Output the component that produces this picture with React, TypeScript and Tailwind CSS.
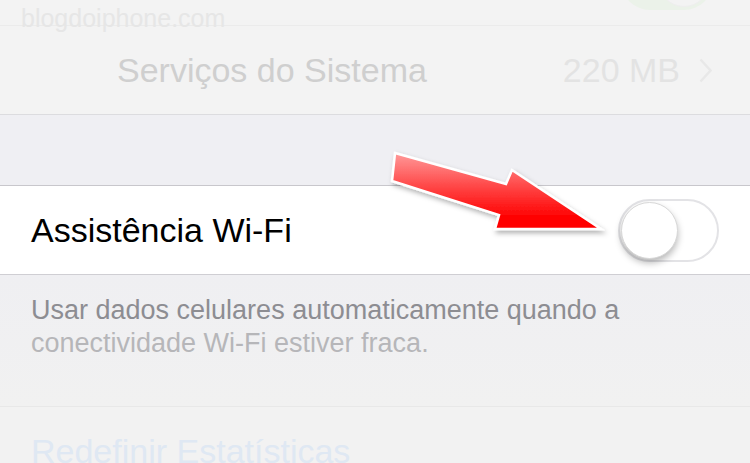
import React from 'react';

function Toggle({ faded = false }: { faded?: boolean }) {
  if (faded) {
    return (
      <div className="relative w-[92px] h-[58px] rounded-full bg-[#ebf2e9] flex items-center justify-end pr-[3px]">
        <div className="w-[52px] h-[52px] rounded-full bg-[#f3f3f3] border border-[#eeeeee]" />
      </div>
    );
  }
  return (
    <div className="w-[101px] h-[63px] rounded-full border-2 border-[#e3e3e6] bg-white flex items-center px-[1px]">
      <div className="w-[57px] h-[57px] rounded-full bg-white border border-[#d8d8d8] shadow-[0_4px_7px_rgba(0,0,0,0.28)]" />
    </div>
  );
}

function Arrow() {
  return (
    <svg className="absolute left-0 top-0 pointer-events-none" width="750" height="463" viewBox="0 0 750 463">
      <defs>
        <linearGradient id="arrowFill" x1="0" y1="152" x2="0" y2="230" gradientUnits="userSpaceOnUse">
          <stop offset="0" stopColor="#ff9c9c" />
          <stop offset="0.5" stopColor="#ff3c3c" />
          <stop offset="0.85" stopColor="#ff0000" />
          <stop offset="1" stopColor="#ff0000" />
        </linearGradient>
        <filter id="arrowShadow" x="-10%" y="-20%" width="130%" height="160%">
          <feDropShadow dx="2" dy="3" stdDeviation="2.5" floodColor="#000" floodOpacity="0.3" />
        </filter>
      </defs>
      <polygon
        points="395,153 506,184 512,170 601,229 495,229 499,215 392,181"
        fill="url(#arrowFill)"
        stroke="#ffffff"
        strokeWidth="2.5"
        strokeLinejoin="miter"
        filter="url(#arrowShadow)"
      />
    </svg>
  );
}

export default function App() {
  return (
    <div className="relative w-[750px] h-[463px] overflow-hidden bg-[#efeff3] font-['Liberation_Sans',Arial,sans-serif]">
      {/* previous row, mostly cut off */}
      <div className="h-[25px] bg-[#f3f3f3] flex items-end justify-end pr-[37px] pb-[15px] overflow-hidden">
        <Toggle faded />
      </div>
      <div className="h-px bg-[#ebebeb]" />

      {/* Serviços do Sistema */}
      <div className="h-[88px] bg-[#f3f3f3] flex items-center pl-[117px] pr-[38px]">
        <span className="text-[34px] leading-[40px] text-[#cfcfcf] flex-1">Serviços do Sistema</span>
        <span className="text-[34px] leading-[40px] text-[#e3e3e3]">220 MB</span>
        <svg className="ml-[19px]" width="13" height="25" viewBox="0 0 13 25">
          <polyline points="1.5,1.5 11.5,12.5 1.5,23.5" fill="none" stroke="#e8e8e8" strokeWidth="2.5" />
        </svg>
      </div>
      <div className="h-px bg-[#dcdcdf]" />

      {/* spacer */}
      <div className="h-[70px] bg-[#efeff3]" />
      <div className="h-px bg-[#c8c7cc]" />

      {/* Assistência Wi-Fi */}
      <div className="h-[88px] bg-white flex items-center justify-between pl-[31px] pr-[31px]">
        <span className="text-[34px] leading-[40px] text-black">Assistência Wi-Fi</span>
        <Toggle />
      </div>
      <div className="h-px bg-[#cfced3]" />

      {/* footer text */}
      <div className="h-[131px] bg-gradient-to-b from-[#efeff2] to-[#f1f1f1] pt-[19px] pl-[31px] text-[27px] leading-[33px]">
        <span className="block text-[#8d8d92]">Usar dados celulares automaticamente quando a</span>
        <span className="block text-[#b6b6b9]">conectividade Wi-Fi estiver fraca.</span>
      </div>
      <div className="h-px bg-[#e8e8e8]" />

      {/* Redefinir Estatísticas */}
      <div className="h-[88px] bg-[#f2f2f2] flex items-center pl-[31px]">
        <span className="text-[34px] leading-[40px] text-[#dfe8f3]">Redefinir Estatísticas</span>
      </div>

      {/* watermark */}
      <span className="absolute left-[21px] top-[6px] text-[25px] leading-[25px] text-[#e6e6e6]">blogdoiphone.com</span>

      <Arrow />
    </div>
  );
}
